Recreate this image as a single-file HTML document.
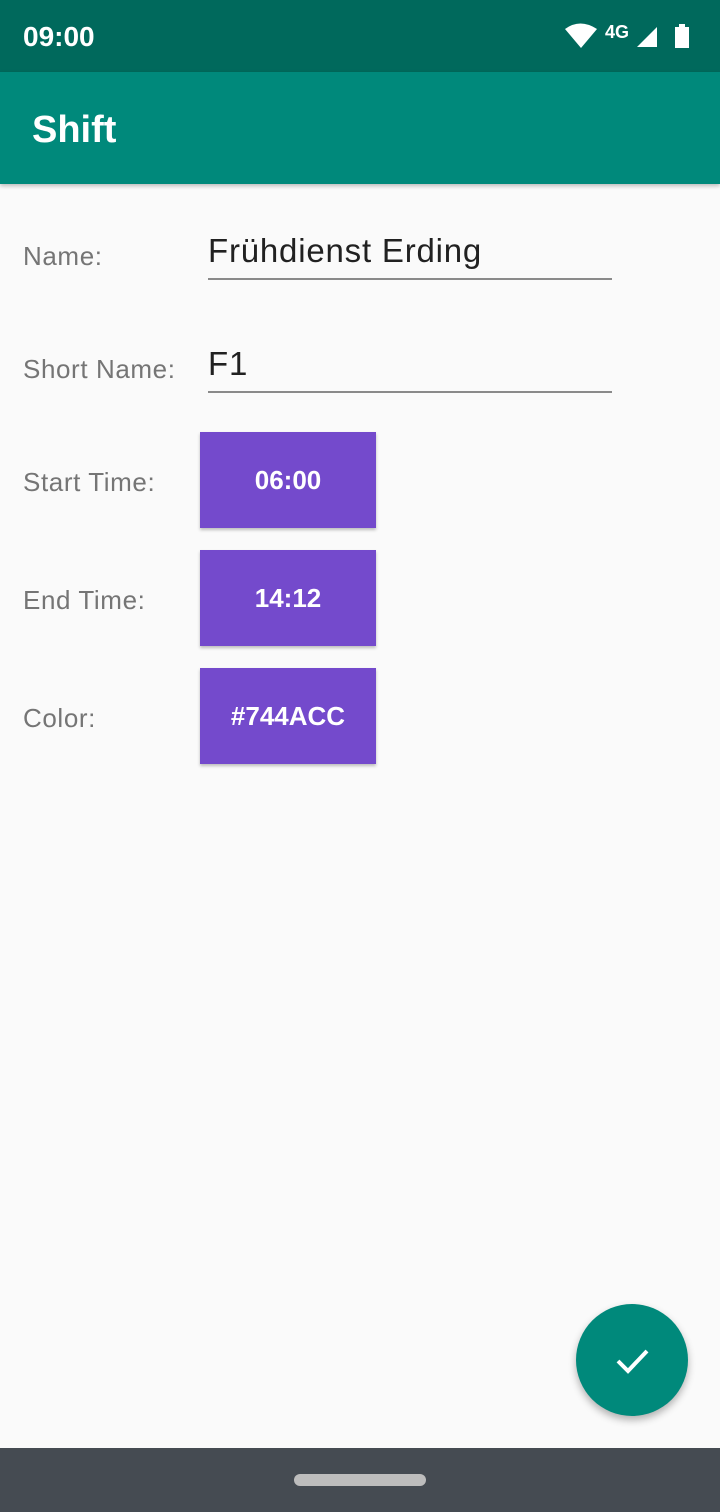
<!DOCTYPE html>
<html><head><style>
body{margin:0;width:720px;height:1512px;background:#fafafa;font-family:"Liberation Sans",Roboto,sans-serif;position:relative;overflow:hidden}
.sb{position:absolute;top:0;left:0;width:720px;height:72px;background:#00695c;color:#fff}
.ab{position:absolute;top:72px;left:0;width:720px;height:112px;background:#00897b;box-shadow:0 2px 4px rgba(0,0,0,.25)}
.lbl{position:absolute;left:23px;font-size:26px;color:#757575;letter-spacing:0.6px}
.inp{position:absolute;left:208px;width:404px;border-bottom:2px solid #8a8a8a;font-size:33px;color:#212121;letter-spacing:0.8px}
.btn{position:absolute;left:200px;width:176px;height:96px;background:#744acc;color:#fff;font-size:26px;font-weight:bold;display:flex;align-items:center;justify-content:center;box-shadow:0 2px 3px rgba(0,0,0,.25)}
</style></head><body>
<div class="sb">
<div style="position:absolute;left:23px;top:21px;font-size:28px;font-weight:bold">09:00</div>
<svg style="position:absolute;left:560px;top:20px" width="140" height="32" viewBox="0 0 140 32">
<path d="M5 9 Q20 -2 37 9 L21 28 Z" fill="#fff"/>
<text x="45" y="18" font-size="18" font-weight="bold" fill="#fff" font-family="Liberation Sans">4G</text>
<path d="M77 27 L97 7 L97 27 Z" fill="#fff"/>
<rect x="119" y="4" width="6" height="4" fill="#fff"/><rect x="115" y="7" width="14" height="21" fill="#fff"/>
</svg>
</div>
<div class="ab"><div style="position:absolute;left:32px;top:37px;color:#fff;font-size:38px;font-weight:bold">Shift</div></div>
<div class="lbl" style="top:241px">Name:</div>
<div class="inp" style="top:232px;height:46px">Frühdienst Erding</div>
<div class="lbl" style="top:354px">Short Name:</div>
<div class="inp" style="top:345px;height:46px">F1</div>
<div class="lbl" style="top:467px">Start Time:</div>
<div class="btn" style="top:432px">06:00</div>
<div class="lbl" style="top:585px">End Time:</div>
<div class="btn" style="top:550px">14:12</div>
<div class="lbl" style="top:703px">Color:</div>
<div class="btn" style="top:668px">#744ACC</div>
<div style="position:absolute;left:576px;top:1304px;width:112px;height:112px;border-radius:50%;background:#00897b;box-shadow:0 4px 8px rgba(0,0,0,.3)">
<svg width="112" height="112"><path d="M42 57 L52 67 L71 47" stroke="#fff" stroke-width="4" fill="none"/></svg></div>
<div style="position:absolute;top:1448px;left:0;width:720px;height:64px;background:#454b52"><div style="position:absolute;left:294px;top:26px;width:132px;height:12px;border-radius:6px;background:#bdbdbd"></div></div>
</body></html>
